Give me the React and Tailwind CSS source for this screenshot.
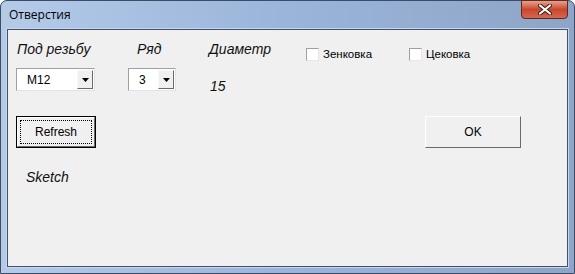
import React from 'react';

const ui = { fontFamily: '"Liberation Sans", Tahoma, sans-serif' };
const gost = { fontFamily: '"Liberation Sans", sans-serif', fontStyle: 'italic' };

function Combo({ value, width }) {
  return (
    <div
      className={`${width} h-[23px] flex bg-white border border-t-[#a0a0a0] border-l-[#a0a0a0] border-r-[#e3e3e3] border-b-[#e3e3e3]`}
    >
      <div className="flex-1 flex items-center pl-[10px] text-[12px] text-black" style={ui}>
        {value}
      </div>
      <div className="w-[16px] my-[1px] mr-[1px] flex items-center justify-center bg-[#f0f0f0] border border-t-[#f8f8f8] border-l-[#f8f8f8] border-r-[#696969] border-b-[#696969]">
        <svg width="7" height="4" viewBox="0 0 7 4">
          <path d="M0 0h7L3.5 4z" fill="#000" />
        </svg>
      </div>
    </div>
  );
}

function Check({ label }) {
  return (
    <div className="flex items-center gap-[4px]">
      <div className="w-[13px] h-[13px] bg-white border border-t-[#a0a0a0] border-l-[#a0a0a0] border-r-[#e6e6e6] border-b-[#e6e6e6]" />
      <span className="text-[11.5px] text-black" style={ui}>{label}</span>
    </div>
  );
}

export default function App() {
  return (
    <div className="w-[575px] h-[274px] flex flex-col rounded-t-[7px] bg-[#7f96bb] border border-[#3c4c68] bg-gradient-to-r from-[#b4cbe8] via-[#9ab4da] to-[#8ea5c7]">
      <div className="h-[28px] flex items-start justify-between pl-[8px]">
        <span className="mt-[5px] text-[12px] text-black" style={{ fontFamily: '"Open Sans", sans-serif' }}>
          Отверстия
        </span>
        <div className="w-[47px] h-[19px] mr-[6px] -mt-[1px] flex items-center justify-center rounded-b-[4px] border border-[#5a2a24] bg-gradient-to-b from-[#e8a08e] via-[#c9452c] to-[#d4684f]">
          <svg width="14" height="11" viewBox="0 0 14 11">
            <path
              d="M2 1.5l10 8M12 1.5l-10 8"
              stroke="#3b1a14"
              strokeWidth="4"
              strokeLinecap="round"
            />
            <path d="M2 1.5l10 8M12 1.5l-10 8" stroke="#fff" strokeWidth="2.2" strokeLinecap="round" />
          </svg>
        </div>
      </div>
      <div className="flex-1 mx-[6px] mb-[6px] border border-[#42516d] outline outline-1 outline-[#c9d6ea]">
        <div className="h-full bg-[#f0f0f0] flex flex-col">
          <div className="flex items-start pl-[9px] pt-[9px] h-[38px]">
            <span className="w-[120px] text-[14px] text-[#111]" style={gost}>Под резьбу</span>
            <span className="w-[72px] text-[14px] text-[#111]" style={gost}>Ряд</span>
            <span className="w-[97px] text-[14px] text-[#111]" style={gost}>Диаметр</span>
            <div className="w-[103px] mt-[7px]"><Check label="Зенковка" /></div>
            <div className="mt-[7px]"><Check label="Цековка" /></div>
          </div>
          <div className="flex items-start pl-[8px] h-[48px]">
            <div className="w-[112px]"><Combo value="M12" width="w-[79px]" /></div>
            <div className="w-[82px]"><Combo value="3" width="w-[48px]" /></div>
            <span className="mt-[8px] text-[14px] text-[#111]" style={gost}>15</span>
          </div>
          <div className="flex items-start justify-between pl-[8px] pr-[46px] h-[48px]">
            <div className="w-[80px] h-[32px] border border-black">
              <div className="h-full border border-t-white border-l-white border-r-[#696969] border-b-[#696969] bg-[#f0f0f0] p-[2px]">
                <div className="h-full border border-dotted border-black flex items-center justify-center text-[12px] text-black" style={ui}>
                  Refresh
                </div>
              </div>
            </div>
            <div className="w-[96px] h-[32px] border border-t-white border-l-white border-r-[#696969] border-b-[#696969] bg-[#f0f0f0] flex items-center justify-center text-[12px] text-black" style={ui}>
              OK
            </div>
          </div>
          <div className="pl-[18px]">
            <span className="text-[14px] text-[#111]" style={gost}>Sketch</span>
          </div>
        </div>
      </div>
    </div>
  );
}
